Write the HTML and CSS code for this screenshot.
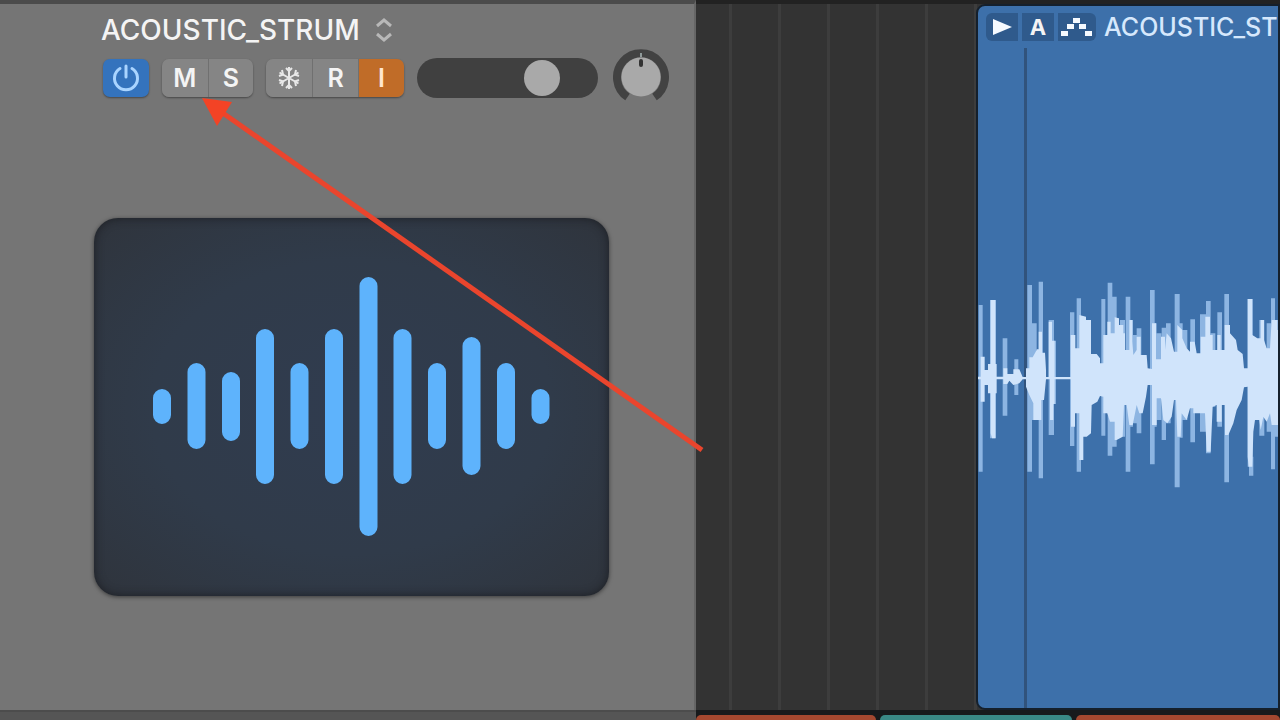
FILE: index.html
```html
<!DOCTYPE html>
<html lang="en">
<head>
  <meta charset="UTF-8">
  <meta name="viewport" content="width=device-width, initial-scale=1.0">
  <title>ACOUSTIC_STRUM</title>
  <link rel="stylesheet" href="styles.css">
</head>
<body>
  <main class="tracks">
    <section class="track-header">
      <div class="track-name">
        <h1>ACOUSTIC_STRUM</h1>
        <button class="name-toggle" aria-label="Track name menu">
          <svg width="20" height="24" viewBox="0 0 20 24"><path d="M3 8 L10 2 L17 8 M3 16 L10 22 L17 16"/></svg>
        </button>
      </div>

      <div class="controls">
        <button class="btn power" aria-label="Power">
          <svg width="30" height="30" viewBox="0 0 30 30"><path d="M9 5.500 A11.500 11.500 0 1 0 21 5.500 M15 3 V14"/></svg>
        </button>
        <div class="btn-group">
          <button class="btn">M</button>
          <button class="btn">S</button>
        </div>
        <div class="btn-group">
          <button class="btn freeze" aria-label="Freeze">
            <svg width="26" height="26" viewBox="0 0 26 26">
              <path d="M13 2 V24 M3.500 7.500 L22.500 18.500 M22.500 7.500 L3.500 18.500"/>
              <path d="M10 3 L13 6 L16 3 M10 23 L13 20 L16 23 M3 11 L7 9.500 L6 5 M23 15 L19 16.500 L20 21 M20 5 L19 9.500 L23 11 M6 21 L7 16.500 L3 15"/>
            </svg>
          </button>
          <button class="btn">R</button>
          <button class="btn input-on">I</button>
        </div>
        <input class="volume" type="range" min="0" max="100" value="74" aria-label="Volume">
        <label class="knob">
          <input type="range" min="-64" max="63" value="0" aria-label="Pan">
          <svg width="58" height="58" viewBox="0 0 58 58">
            <path class="knob-ring" d="M15.500 48 A24 24 0 1 1 42.500 48"/>
            <circle class="knob-cap" cx="29" cy="28" r="19.500"/>
            <path class="knob-tick" d="M29 4 V8"/>
            <path class="knob-mark" d="M29 12 V16"/>
          </svg>
        </label>
      </div>

      <div class="track-icon">
        <svg width="515" height="378" viewBox="94 218 515 378">
          <path d="M162 398 V415 M196.500 372 V440 M231 381 V432 M265 338 V475 M299.500 372 V440 M334 338 V475 M368.500 286 V527 M402.500 338 V475 M437 372 V440 M471.500 346 V466 M506 372 V440 M540.500 398 V415"/>
        </svg>
      </div>
    </section>

    <section class="lane">
      <article class="region">
        <header class="region-head">
          <div class="tags">
            <button class="tag" aria-label="Play">
              <svg width="30" height="26" viewBox="0 0 30 26"><path d="M6 5 L25 13 L6 21 Z"/></svg>
            </button>
            <button class="tag">A</button>
            <button class="tag wide" aria-label="Flex markers">
              <svg width="36" height="26" viewBox="0 0 36 26"><path d="M14 4h7v5h-7z M8 10h7v5h-7z M20 10h7v5h-7z M2 17h7v5h-7z M26 17h7v5h-7z"/></svg>
            </button>
          </div>
          <h2>ACOUSTIC_ST</h2>
        </header>
        <div class="region-body">
          <svg class="wave" width="302" height="230" viewBox="24 0 906 690">
            <path class="peaks" d="M26 105h12V605h-12z M60 90h18V505h-18z M98 205h14V437h-14z M133 268h12V375h-12z M172 45h14V605h-14z M186 160h14V450h-14z M206 35h13V625h-13z M236 150h16V495h-16z M250 212h8V402h-8z M300 127h13V528h-13z M320 85h13V605h-13z M394 87h12V497h-12z M413 38h14V557h-14z M427 80h13V530h-13z M450 150h15V500h-15z M467 80h14V605h-14z M481 150h8V470h-8z M489 195h11V460h-11z M500 175h14V490h-14z M540 60h14V583h-14z M554 160h6V470h-6z M560 190h14V450h-14z M575 173h13V510h-13z M588 160h14V460h-14z M614 72h15V652h-15z M629 160h9V503h-9z M638 180h14V450h-14z M661 148h14V517h-14z M690 133h18V485h-18z M708 93h14V550h-14z M722 190h14V410h-14z M742 127h14V470h-14z M763 72h14V637h-14z M833 87h15V590h-15z M837 560h13V617h-13z M868 150h15V497h-15z M890 160h15V485h-15z M903 85h12V598h-12z M912 150h18V500h-18z"/>
            <path class="body" d="M24 320H32V260H44V300H54V282H62V90H76V282H80V320H100V295H112V312H130V298H148L158 321H168V295H178V262H188L200 240V238H206V185H216V248H225L228 300V321H236V155H246V212H254V321H302V195H316V235H328V135L348 140V150H363V252H380L390 265V280H400V195H412V155H422V190H434V142L447 145V165H460V190H465V240H478V150H487V215L490 255L500 240V200H512V255H530L533 295L546 297V160H558V268H573V200H585V240L590 190L603 205L612 245H622V165L637 180V205L650 235L660 245V215H674L680 250H692V200H706V140H720V195H728V240H742V195H752V240H764V165H780V190L798 210L803 240L818 252L822 295H833V87H847V195L862 205H872V150H882V210L890 235H900L905 150H922V180H930V465H905L900 430L890 455L880 440L872 480L868 450H855L850 485L847 590H836L833 560V350L822 352L815 390L800 420L790 460L775 495H765V405H755V455H740V405L728 410L722 545H710L705 430H670V415H660L650 450L635 430L632 500H622L618 390H612L605 440L592 460L580 450L573 385H560V465H546V345H533L528 380L518 430H508L500 405L488 465H478L470 405H462L458 500L440 510H434V455H420L412 430H400V380L390 378L382 395L365 405L363 490L350 500H340V570H328V430H315V470H303V328H254V402H250V450H240V328H228L222 390H214V450H190V400L178 375L168 350V328H158L148 340L130 345L118 332L112 342H100V328H80V370H76V505H66L62 490V370H54V345H44V395H32V328H24Z"/>
          </svg>
        </div>
      </article>
    </section>

    <div class="next-header"></div>
    <div class="next-lane">
      <div class="clip red"></div>
      <div class="clip teal"></div>
      <div class="clip red last"></div>
    </div>
  </main>

  <svg class="arrow" width="520" height="370" viewBox="190 90 520 370" aria-hidden="true">
    <path class="arrow-line" d="M220 111 L702 450"/>
    <path class="arrow-head" d="M202 98 L232 102 L217 126 Z"/>
  </svg>
</body>
</html>
```
FILE: styles.css
```css
:root {
  --panel: #757575;
  --lane: #333333;
  --region: #3d70aa;
  --text: #f4f4f4;
}

* {
  box-sizing: border-box;
  margin: 0;
  padding: 0;
}

body {
  position: relative;
  background: var(--lane);
  color: var(--text);
  font-family: Inter, "Liberation Sans", sans-serif;
  overflow-x: hidden;
}

button {
  border: 0;
  background: none;
  color: inherit;
  font: inherit;
}

svg {
  display: block;
  fill: none;
}

.tracks {
  display: grid;
  grid-template-columns: 696px 1fr;
  grid-template-rows: 1fr 10px;
  min-height: 100vh;
}

/* track header */
.track-header {
  background: var(--panel);
  border-top: 4px solid #4b4b4b;
  border-right: 2px solid #666666;
  padding: 8px 24px 24px 94px;
}

.track-name {
  display: flex;
  align-items: center;
  gap: 14px;
  height: 36px;
  padding-left: 7px;
}

.track-name h1 {
  font-size: 28px;
  font-weight: 500;
  line-height: 36px;
}

.name-toggle path {
  stroke: #b8b8b8;
  stroke-width: 3;
}

.controls {
  display: flex;
  align-items: center;
  height: 60px;
  padding-left: 9px;
}

.btn {
  display: flex;
  align-items: center;
  justify-content: center;
  width: 46px;
  height: 38px;
  background: #858585;
  font-size: 25px;
  font-weight: 600;
}

.power {
  margin-right: 13px;
  border-radius: 7px;
  background: #3473bd;
  box-shadow: 0 1px 2px rgba(0, 0, 0, 0.4);
}

.power path {
  stroke: #a9d4ff;
  stroke-width: 3;
  stroke-linecap: round;
}

.btn-group {
  display: flex;
  margin-right: 13px;
  border-radius: 7px;
  overflow: hidden;
  box-shadow: 0 1px 2px rgba(0, 0, 0, 0.4);
}

.btn-group .btn + .btn {
  border-left: 1px solid #707070;
}

.freeze path {
  stroke: #e8e8e8;
  stroke-width: 2;
}

.btn.input-on {
  background: #c06c28;
  color: #ffe6cf;
}

.volume {
  appearance: none;
  width: 182px;
  height: 40px;
  border-radius: 20px;
  background: #404040;
}

.volume::-webkit-slider-thumb {
  appearance: none;
  width: 36px;
  height: 36px;
  border-radius: 50%;
  background: #a9a9a9;
}

.knob {
  position: relative;
  margin-left: 14px;
}

.knob input {
  position: absolute;
  inset: 0;
  width: 100%;
  opacity: 0;
}

.knob-ring {
  stroke: #424242;
  stroke-width: 8;
}

.knob-cap {
  fill: #a9a9a9;
}

.knob-tick {
  stroke: #8f9a9a;
  stroke-width: 2;
}

.knob-mark {
  stroke: #333333;
  stroke-width: 4;
  stroke-linecap: round;
}

.track-icon {
  width: 515px;
  margin-top: 110px;
  border-radius: 24px;
  background: radial-gradient(ellipse at center, #303c4f 0%, #303b4a 55%, #2f343c 100%);
  box-shadow: inset 0 0 10px rgba(20, 22, 26, 0.7), 0 1px 4px rgba(0, 0, 0, 0.5);
}

.track-icon path {
  stroke: #5eb3fc;
  stroke-width: 18;
  stroke-linecap: round;
}

/* timeline */
.lane {
  display: flex;
  min-width: 0;
  padding-left: 280px;
  border-top: 4px solid #222222;
  background: repeating-linear-gradient(to right, transparent 0 33px, #3d3d3d 33px 36px, transparent 36px 49px) var(--lane);
}

.region {
  display: flex;
  flex-direction: column;
  flex: 1;
  min-width: 0;
  border: 2px solid #15202c;
  border-radius: 9px 0 0 9px;
  background: var(--region);
  overflow: hidden;
}

.region-head {
  display: flex;
  align-items: center;
  gap: 8px;
  height: 42px;
  padding-left: 8px;
}

.region-head h2 {
  font-size: 25px;
  font-weight: 500;
  color: #d6e8fc;
}

.tags {
  display: flex;
  gap: 4px;
  border-radius: 6px;
  overflow: hidden;
}

.tag {
  display: flex;
  flex: none;
  align-items: center;
  justify-content: center;
  width: 32px;
  height: 28px;
  background: #2f5a8c;
  font-size: 22px;
  font-weight: 700;
}

.tag.wide {
  width: 38px;
}

.tag path {
  fill: #f6faff;
}

.region-body {
  display: flex;
  flex: 1;
  align-items: center;
  padding-top: 14px;
  background: linear-gradient(#31537c, #31537c) 46px 0 / 3px 100% no-repeat;
}

.wave {
  flex: none;
}

.peaks {
  fill: #8db5e2;
}

.body {
  fill: #d0e4fb;
}

/* next track */
.next-header {
  background: #555555;
  border-top: 2px solid #4c4c4c;
}

.next-lane {
  display: flex;
  gap: 4px;
  padding-top: 5px;
  background: #171a1c;
}

.clip {
  width: 180px;
  border-radius: 6px 6px 0 0;
}

.clip.red {
  background: #a34830;
}

.clip.teal {
  width: 192px;
  background: #398986;
}

.clip.last {
  flex: 1;
}

/* pointer drawn over both panes */
.arrow {
  position: absolute;
  top: 90px;
  left: 190px;
  pointer-events: none;
}

.arrow-line {
  stroke: #ea452d;
  stroke-width: 5;
}

.arrow-head {
  fill: #f34325;
}
```
